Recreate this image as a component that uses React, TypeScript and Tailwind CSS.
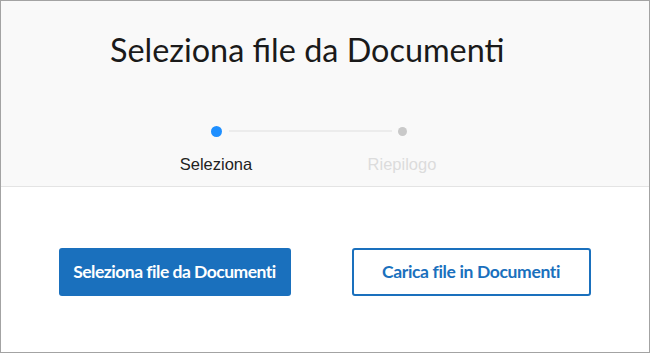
import React from 'react';

const steps = [
  { label: 'Seleziona', active: true },
  { label: 'Riepilogo', active: false },
];

const Stepper = () => (
  <div className="grid grid-cols-2 w-[372px] ml-[122px]">
    {steps.map((step, i) => (
      <div key={step.label} className="flex flex-col items-center">
        <div className="flex items-center w-full h-[12px]">
          <div className="flex-1 flex">
            {i === 1 && <div className="flex-1 h-[2px] bg-[#ececec] mr-[6px]"></div>}
          </div>
          {step.active ? (
            <div className="w-[11px] h-[11px] rounded-full bg-[#1e8fff]"></div>
          ) : (
            <div className="w-[9px] h-[9px] rounded-full bg-[#c9c9c9]"></div>
          )}
          <div className="flex-1 flex">
            {i === 0 && <div className="flex-1 h-[2px] bg-[#ececec] ml-[7px]"></div>}
          </div>
        </div>
        <span
          className={`mt-[18px] text-[16.5px] leading-[18px] font-['Liberation_Sans',Arial,sans-serif] ${
            step.active ? 'text-[#222222]' : 'text-[#dcdcdc]'
          }`}
        >
          {step.label}
        </span>
      </div>
    ))}
  </div>
);

export default function App() {
  return (
    <div className="w-[650px] h-[353px] border border-[#a3a3a3] bg-white flex flex-col font-['Lato',sans-serif]">
      <div className="h-[186px] bg-[#f9f9f9] border-b border-[#e4e4e4] flex flex-col">
        <h1 className="mt-[29px] ml-[109px] text-[32.4px] leading-[40px] text-[#1a1a1a] font-normal">
          Seleziona file da Documenti
        </h1>
        <div className="mt-[55px]">
          <Stepper />
        </div>
      </div>
      <div className="flex justify-center gap-[61px] mt-[61px] ml-[-1px]">
        <button className="w-[232px] h-[48px] rounded-[3px] bg-[#1a70bd] text-white text-[17.5px] font-bold tracking-[-0.5px]">
          Seleziona file da Documenti
        </button>
        <button className="w-[239px] h-[48px] rounded-[3px] border-2 border-[#1a70bd] bg-white text-[#1a70bd] text-[17.5px] font-bold tracking-[-0.35px]">
          Carica file in Documenti
        </button>
      </div>
    </div>
  );
}
